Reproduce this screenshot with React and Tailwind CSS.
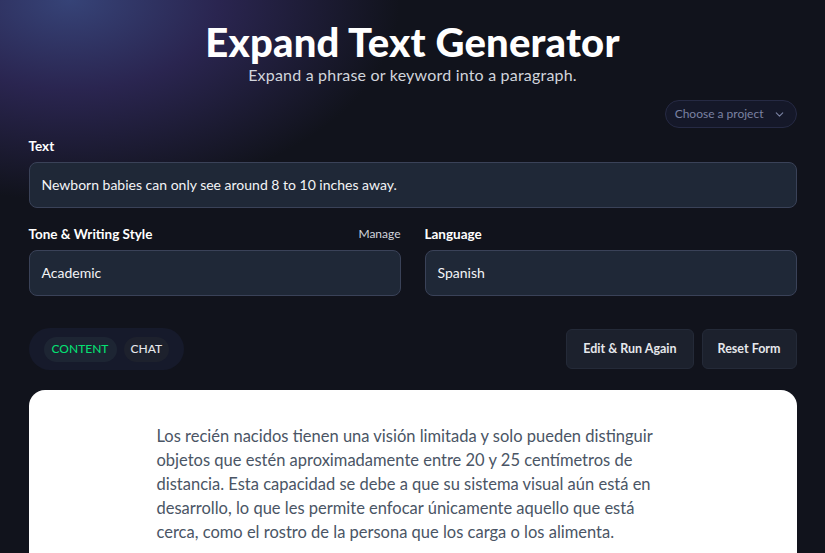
import { ChevronDown } from 'lucide-react'

const FIELD = 'w-full h-[46px] flex items-center px-3 rounded-lg bg-[#1f2837] border border-[#3a4258] text-sm text-gray-100'
const LABEL = 'text-[13.5px] leading-5 font-bold text-white'
const ACTION = 'h-[40px] rounded-md bg-[#1c212d] border border-[#242a38] text-[12.5px] font-bold text-gray-200'

const OUTPUT =
  'Los recién nacidos tienen una visión limitada y solo pueden distinguir objetos que estén aproximadamente entre 20 y 25 centímetros de distancia. Esta capacidad se debe a que su sistema visual aún está en desarrollo, lo que les permite enfocar únicamente aquello que está cerca, como el rostro de la persona que los carga o los alimenta.'

export default function App() {
  return (
    <div className="min-h-screen bg-[#11131c] bg-[radial-gradient(ellipse_330px_200px_at_70px_0px,#364377_0%,#2a2550_45%,#11131c_100%)] font-['Lato',sans-serif] overflow-hidden">
      <div className="mx-auto w-[768px] pt-[21px]">
        {/* Heading */}
        <div className="flex flex-col items-center">
          <h1 className="text-[40px] leading-[42px] font-black text-white tracking-[0.2px]">Expand Text Generator</h1>
          <p className="mt-[2px] text-[16px] leading-5 text-gray-300 tracking-[0.2px]">Expand a phrase or keyword into a paragraph.</p>
        </div>

        <div className="flex justify-end mt-[15px]">
          <button className="h-[28px] flex items-center gap-[9px] pl-[9px] pr-[10px] rounded-full border border-[#262a44] bg-[#151829] text-xs text-[#7b82a3]">
            Choose a project
            <ChevronDown size={13} strokeWidth={2} />
          </button>
        </div>

        {/* Form */}
        <div className="mt-[8px]">
          <div className={LABEL}>Text</div>
          <div className={`${FIELD} mt-[6px]`}>Newborn babies can only see around 8 to 10 inches away.</div>
        </div>

        <div className="grid grid-cols-2 gap-6 mt-[16px]">
          <div>
            <div className="flex justify-between items-center">
              <span className={LABEL}>Tone &amp; Writing Style</span>
              <span className="text-xs text-gray-300">Manage</span>
            </div>
            <div className={`${FIELD} mt-[6px]`}>Academic</div>
          </div>
          <div>
            <div className={LABEL}>Language</div>
            <div className={`${FIELD} mt-[6px]`}>Spanish</div>
          </div>
        </div>

        {/* Toolbar */}
        <div className="flex justify-between items-center mt-[32px]">
          <div className="flex items-center gap-[7px] h-[42px] px-[15px] rounded-full bg-[#161a2b]">
            <span className="h-[25px] flex items-center px-[8px] rounded-full bg-[#1d2533] text-xs font-medium text-green-400">CONTENT</span>
            <span className="h-[25px] flex items-center px-[7px] rounded-full bg-[#1d212d] text-xs font-medium text-gray-200">CHAT</span>
          </div>
          <div className="flex gap-2">
            <button className={`${ACTION} px-4`}>Edit &amp; Run Again</button>
            <button className={`${ACTION} px-[15px]`}>Reset Form</button>
          </div>
        </div>

        {/* Result */}
        <div className="mt-[20px] bg-white rounded-2xl pt-[34px] pb-10 px-[128px]">
          <p className="text-[16.5px] leading-6 text-gray-600">{OUTPUT}</p>
        </div>
      </div>
    </div>
  )
}
